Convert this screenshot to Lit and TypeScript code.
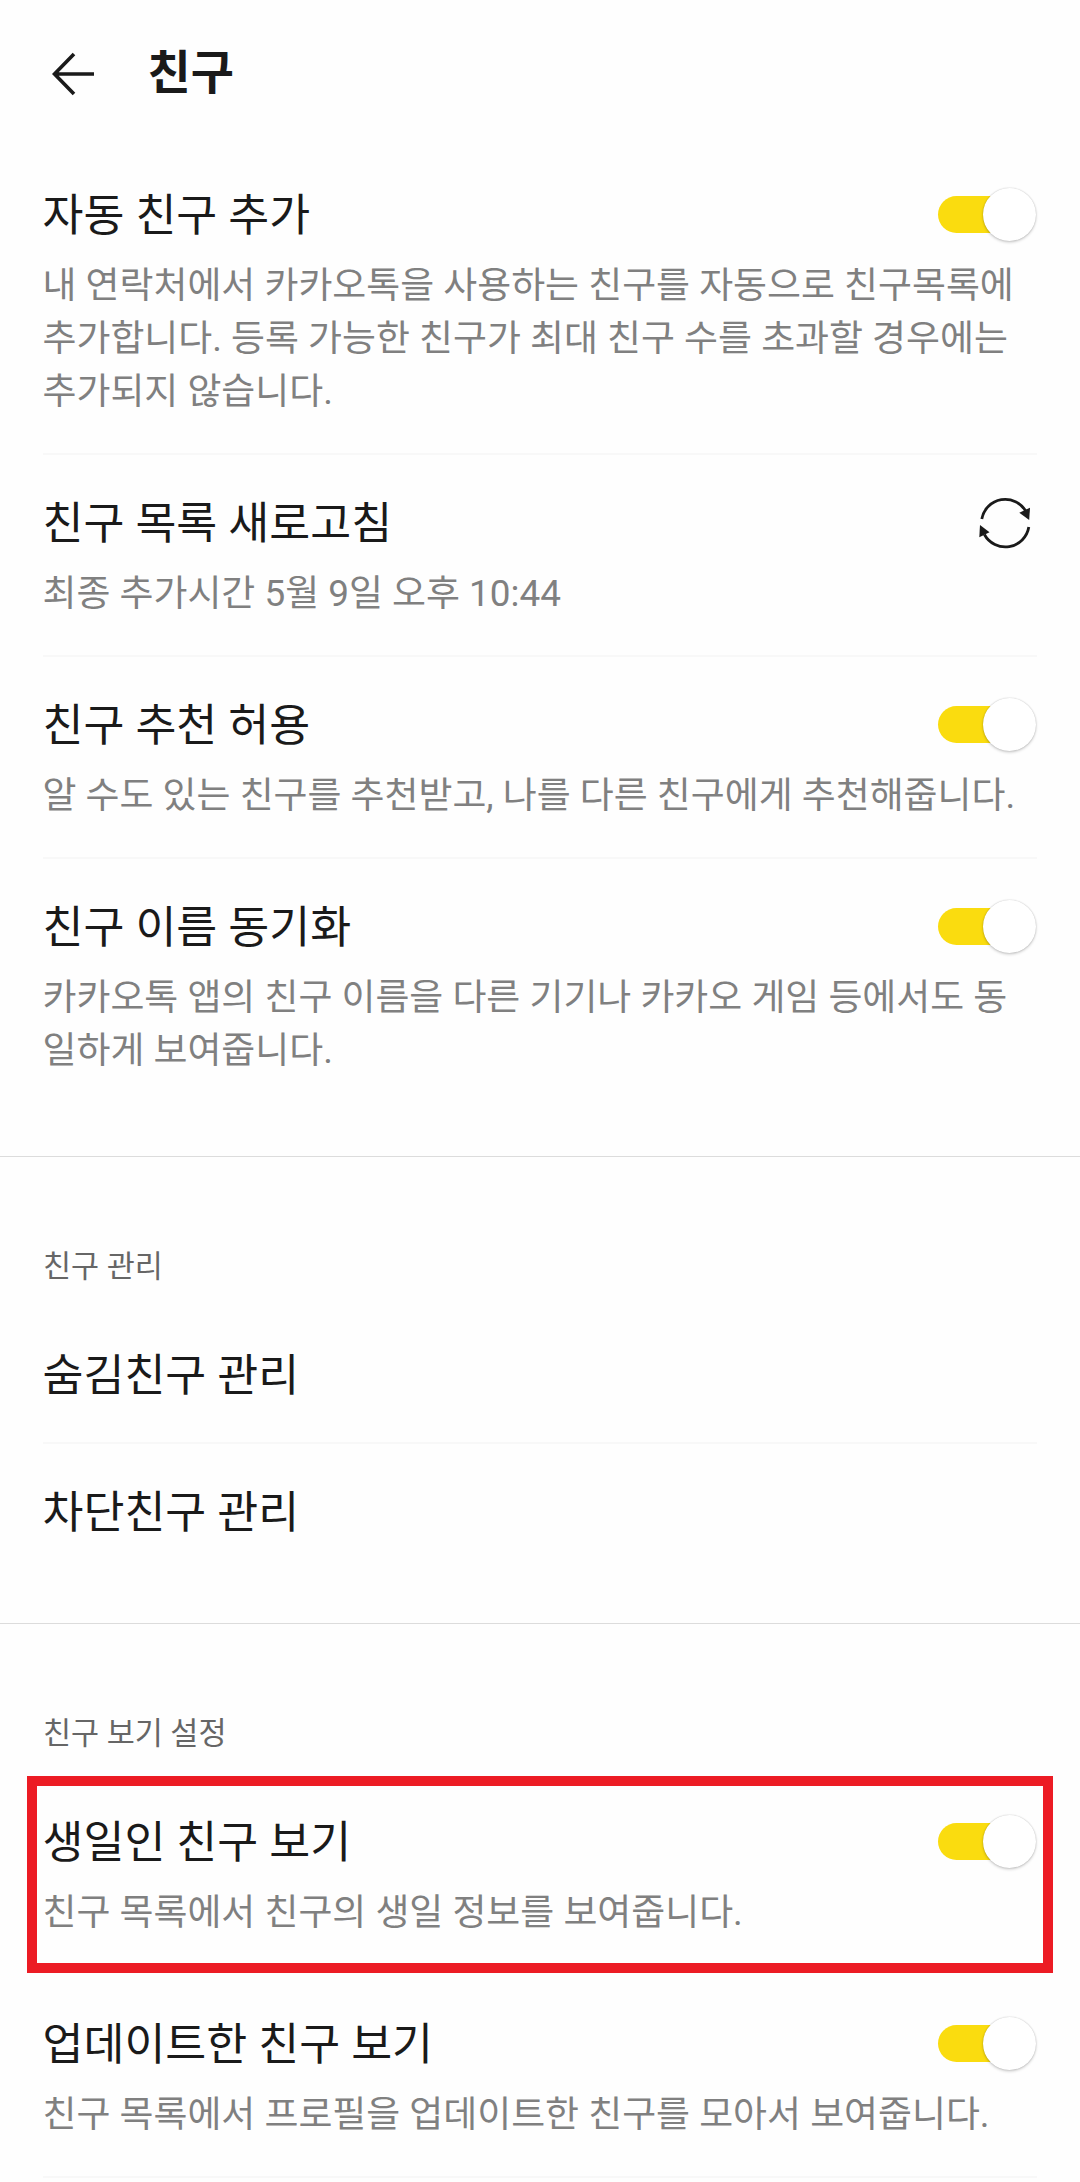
import { LitElement, html, css, svg, nothing } from "lit";
import { customElement, property } from "lit/decorators.js";

@customElement("toggle-switch")
class ToggleSwitch extends LitElement {
  static styles = css`
    :host { display: block; flex: none; margin-bottom: 3px; }
    .track {
      display: flex; align-items: center; justify-content: flex-end;
      width: 94px; height: 37px; border-radius: 19px; background: #fadc0f;
      margin-right: 5px;
    }
    .knob {
      flex: none; width: 53px; height: 53px; border-radius: 50%; background: #fff;
      margin-right: -4px;
      box-shadow: 0 0 1.5px rgba(0, 0, 0, .24), 0 1.5px 3px rgba(0, 0, 0, .18);
    }
  `;
  render() {
    return html`<div class="track"><div class="knob"></div></div>`;
  }
}

type Item = { title: string; lines?: string[]; control?: "toggle" | "refresh"; marked?: boolean };

@customElement("setting-row")
class SettingRow extends LitElement {
  @property({ attribute: false }) item!: Item;
  static styles = css`
    :host { display: block; }
    .row { position: relative; padding: 39px 43px 0 42.5px; }
    .head { display: flex; align-items: center; justify-content: space-between; height: 60px; }
    .title { font-size: 44.5px; line-height: 60px; color: #1a1a1a; white-space: nowrap; }
    .desc { padding: 13px 0 35px; }
    .line { font-size: 36.9px; line-height: 53px; color: #808080; white-space: nowrap; }
    .plain { padding-bottom: 36px; }
    .refresh { display: block; width: 60px; height: 60px; margin: 0 2.5px 2px 0; }
    .mark {
      position: absolute; left: 27px; top: 2px; width: 1026px; height: 197px;
      box-sizing: border-box; border: 10px solid #ec1c24;
    }
  `;
  render() {
    const { title, lines, control, marked } = this.item;
    return html`<div class="row">
      <div class="head">
        <span class="title">${title}</span>
        ${control === "toggle" ? html`<toggle-switch></toggle-switch>` : nothing}
        ${control === "refresh"
          ? html`<svg class="refresh" viewBox="0 0 60 60" fill="none" stroke="#1a1a1a" stroke-width="2.8">
              ${svg`<path d="M6.8 26A23.8 23.8 0 0 1 51 18.5"/><path d="M53.8 34A23.8 23.8 0 0 1 9.4 41.5"/>
              <path d="M55 14.7L54.2 27L44.3 19.7Z" fill="#1a1a1a" stroke="none"/><path d="M5 32L14.5 39.3L4.3 44.2Z" fill="#1a1a1a" stroke="none"/>`}
            </svg>`
          : nothing}
      </div>
      ${lines
        ? html`<div class="desc">${lines.map((l) => html`<div class="line">${l}</div>`)}</div>`
        : html`<div class="plain"></div>`}
      ${marked ? html`<div class="mark"></div>` : nothing}
    </div>`;
  }
}

const groups: { label?: string; items: Item[] }[] = [
  {
    items: [
      {
        title: "자동 친구 추가",
        lines: [
          "내 연락처에서 카카오톡을 사용하는 친구를 자동으로 친구목록에",
          "추가합니다. 등록 가능한 친구가 최대 친구 수를 초과할 경우에는",
          "추가되지 않습니다.",
        ],
        control: "toggle",
      },
      { title: "친구 목록 새로고침", lines: ["최종 추가시간 5월 9일 오후 10:44"], control: "refresh" },
      {
        title: "친구 추천 허용",
        lines: ["알 수도 있는 친구를 추천받고, 나를 다른 친구에게 추천해줍니다."],
        control: "toggle",
      },
      {
        title: "친구 이름 동기화",
        lines: ["카카오톡 앱의 친구 이름을 다른 기기나 카카오 게임 등에서도 동", "일하게 보여줍니다."],
        control: "toggle",
      },
    ],
  },
  { label: "친구 관리", items: [{ title: "숨김친구 관리" }, { title: "차단친구 관리" }] },
  {
    label: "친구 보기 설정",
    items: [
      {
        title: "생일인 친구 보기",
        lines: ["친구 목록에서 친구의 생일 정보를 보여줍니다."],
        control: "toggle",
        marked: true,
      },
      {
        title: "업데이트한 친구 보기",
        lines: ["친구 목록에서 프로필을 업데이트한 친구를 모아서 보여줍니다."],
        control: "toggle",
      },
    ],
  },
];

@customElement("app-root")
class AppRoot extends LitElement {
  static styles = css`
    :host {
      display: block; width: 1080px; height: 2182px; overflow: hidden; background: #fefefe;
      font-family: Roboto, "Noto Sans CJK KR", sans-serif;
    }
    .bar { display: flex; align-items: center; height: 147px; padding-left: 52px; box-sizing: border-box; }
    .back { display: block; width: 42px; height: 44px; }
    .heading { margin: 0 0 1px 53.5px; font-size: 47px; line-height: 60px; font-weight: 700; color: #1a1a1a; }
    .group + .group { border-top: 1px solid #dcdcdc; }
    .group { padding-bottom: 44px; }
    .label { padding: 85px 43px 15px; font-size: 30.5px; line-height: 50px; color: #666; }
    .divider { height: 2px; margin: 0 43px; background: #f8f8f8; }
    .clear { background: none; }
  `;
  render() {
    return html`
      <header class="bar">
        <svg class="back" viewBox="0 0 42 44" fill="none" stroke="#1a1a1a" stroke-width="3.6">
          <path d="M42 22H3M22 2L2.5 22L22 42" />
        </svg>
        <h1 class="heading">친구</h1>
      </header>
      ${groups.map(
        (g, gi) => html`<section class="group">
          ${g.label ? html`<div class="label">${g.label}</div>` : nothing}
          ${g.items.map(
            (item, i) => html`<setting-row .item=${item}></setting-row>
              ${i < g.items.length - 1 || gi === groups.length - 1
                ? html`<div class="divider ${item.marked ? "clear" : ""}"></div>`
                : nothing}`
          )}
        </section>`
      )}
    `;
  }
}
